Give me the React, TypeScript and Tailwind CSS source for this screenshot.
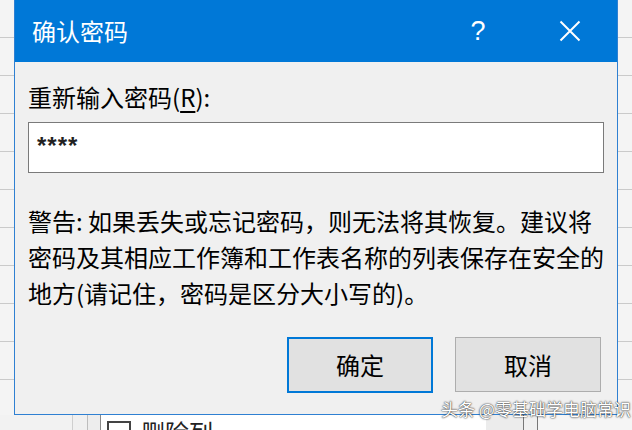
import React from "react";

const font = "font-['Noto_Sans_CJK_SC','Noto_Sans',sans-serif]";

function RowStrip({ className = "" }: { className?: string }) {
  // spreadsheet rows peeking out behind the dialog
  return (
    <div
      className={`bg-[image:repeating-linear-gradient(to_bottom,#f4f4f4_0px,#f4f4f4_37px,#cacaca_37px,#cacaca_38px)] ${className}`}
    />
  );
}

function CloseIcon() {
  return (
    <svg width="22" height="22" viewBox="0 0 22 22" fill="none">
      <path d="M1.5 1.5 L20.5 20.5 M20.5 1.5 L1.5 20.5" stroke="#ffffff" strokeWidth="2" />
    </svg>
  );
}

export default function App() {
  return (
    <div className={`w-[632px] h-[430px] overflow-hidden relative flex flex-col bg-[#f4f4f4] ${font}`}>
      <div className="flex h-[415px]">
        <RowStrip className="w-[14px]" />

        {/* dialog */}
        <div className="w-[604px] h-[415px] flex flex-col border-x border-b border-[#2f80d2]">
          <div className="h-[62px] bg-[#0078d7] flex items-center text-white">
            <span className="pl-[17px] text-[24px] leading-[30px] flex-1">确认密码</span>
            <span className="w-[90px] text-center text-[27px] leading-[30px] font-light font-['Liberation_Sans',sans-serif]">?</span>
            <span className="w-[94px] flex justify-center">
              <CloseIcon />
            </span>
          </div>

          <div className="flex-1 bg-[#f0f0f0] flex flex-col pl-[13px] pr-[13px] pt-[20px]">
            <div className="text-[24px] leading-[30px] text-black">
              重新输入密码(<span className="underline underline-offset-4">R</span>):
            </div>

            <div className="mt-[10px] h-[51px] bg-white border border-[#7a7a7a] pl-[8px] pt-[9px]">
              <span className="text-[24px] leading-[28px] text-[#222] font-['Liberation_Sans',sans-serif] font-bold tracking-[1px]">
                ****
              </span>
            </div>

            <p className="mt-[30px] text-[24px] leading-[36px] text-black whitespace-nowrap">
              警告: 如果丢失或忘记密码，则无法将其恢复。建议将
              <br />
              密码及其相应工作簿和工作表名称的列表保存在安全的
              <br />
              地方(请记住，密码是区分大小写的)。
            </p>

            <div className="mt-[26px] flex justify-end gap-[22px] pr-[3px]">
              <button className="w-[146px] h-[56px] bg-[#e1e1e1] border-2 border-[#0078d7] text-[24px] text-black">
                确定
              </button>
              <button className="w-[146px] h-[55px] bg-[#e1e1e1] border border-[#adadad] text-[24px] text-black">
                取消
              </button>
            </div>
          </div>
        </div>

        <RowStrip className="flex-1" />
      </div>

      {/* sheet content below the dialog */}
      <div className="flex h-[15px]">
        <div className="w-[72px] bg-[#f2f2f2]" />
        <div className="w-[15px] bg-[#f0f0f0] border-l border-[#cfcfcf]" />
        <div className="w-[13px] bg-[#ededed] border-l border-[#bdbdbd]" />
        <div className="w-[386px] bg-white border-l border-[#8a8a8a] flex items-start gap-[10px] pl-[6px] pt-[6px]">
          <div className="w-[24px] h-[24px] border-2 border-[#444] bg-white shrink-0" />
          <span className="text-[24px] leading-[24px] -mt-[1px] text-[#222]">删除列</span>
        </div>
        <div className="w-[37px] bg-[#ececec]" />
        <div className="w-[14px] bg-[#f0f0f0] border-l border-[#777]" />
        <div className="flex-1 bg-[#f5f5f5] border-l border-[#777]" />
      </div>

      {/* watermark */}
      <div className="absolute left-[441px] top-[399px] text-[17px] leading-[20px] text-white whitespace-nowrap [text-shadow:0_0_2px_#333,0_0_1px_#333]">
        头条 @零基础学电脑常识
      </div>
    </div>
  );
}
